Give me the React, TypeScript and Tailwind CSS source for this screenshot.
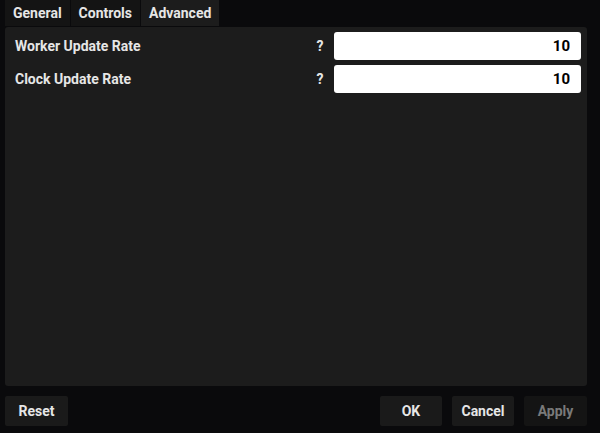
import React from 'react';

const tabs = [
  { name: 'General', active: false },
  { name: 'Controls', active: false },
  { name: 'Advanced', active: true },
];

const fields = [
  { label: 'Worker Update Rate', value: '10' },
  { label: 'Clock Update Rate', value: '10' },
];

export default function App() {
  return (
    <div className="w-[600px] h-[433px] bg-[#0a0a0c] flex flex-col font-['Roboto',sans-serif] font-bold text-[14px] text-[#e6e6e6]">
      <div className="flex h-[26px] pl-[5px]">
        {tabs.map((t) => (
          <div
            key={t.name}
            className={`h-full flex items-center px-[8px] border-r border-[#0a0a0c] ${t.active ? 'bg-[#1c1c1c]' : 'bg-[#141414]'}`}
          >
            {t.name}
          </div>
        ))}
      </div>
      <div className="mt-[1px] mx-[5px] w-[582px] h-[359px] bg-[#1c1c1c] rounded-[3px] pt-[5px] pl-[10px] pr-[6px] flex flex-col gap-[5px]">
        {fields.map((f) => (
          <div key={f.label} className="flex items-center h-[28px]">
            <span className="flex-1">{f.label}</span>
            <span className="w-[10px] text-center mr-[9px]">?</span>
            <input
              readOnly
              value={f.value}
              className="w-[247px] h-full bg-white rounded-[3px] text-right pr-[11px] text-black font-bold text-[15px] outline-none"
            />
          </div>
        ))}
      </div>
      <div className="flex items-start pt-[10px] px-[5px] w-[592px]">
        <button className="w-[63px] h-[30px] bg-[#1a1a1a] rounded-[2px]">Reset</button>
        <div className="flex-1" />
        <div className="flex gap-[10px]">
          <button className="w-[62px] h-[30px] bg-[#1a1a1a] rounded-[2px]">OK</button>
          <button className="w-[62px] h-[30px] bg-[#1a1a1a] rounded-[2px]">Cancel</button>
          <button className="w-[63px] h-[30px] bg-[#141414] rounded-[2px] text-[#7a7a7a]">Apply</button>
        </div>
      </div>
    </div>
  );
}
